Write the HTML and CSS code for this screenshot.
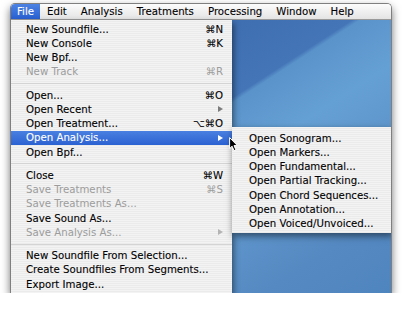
FILE: index.html
```html
<!DOCTYPE html>
<html lang="en">
<head>
    <meta charset="UTF-8">
    <title>File Menu</title>
    <link rel="stylesheet" href="styles.css">
</head>
<body>

    <div class="screen">
        <div class="menubar">
            <span class="title first active">File</span>
            <span class="title">Edit</span>
            <span class="title">Analysis</span>
            <span class="title">Treatments</span>
            <span class="title">Processing</span>
            <span class="title">Window</span>
            <span class="title">Help</span>
        </div>

        <div class="desktop"></div>

        <!-- File menu -->
        <div class="menu file-menu">
            <div class="item"><span>New Soundfile...</span><span class="key">⌘N</span></div>
            <div class="item"><span>New Console</span><span class="key">⌘K</span></div>
            <div class="item"><span>New Bpf...</span></div>
            <div class="item disabled"><span>New Track</span><span class="key">⌘R</span></div>
            <div class="sep"></div>
            <div class="item"><span>Open...</span><span class="key">⌘O</span></div>
            <div class="item"><span>Open Recent</span><span class="arrow gray"></span></div>
            <div class="item"><span>Open Treatment...</span><span class="key">⌥⌘O</span></div>
            <div class="item selected"><span>Open Analysis...</span><span class="arrow"></span></div>
            <div class="item"><span>Open Bpf...</span></div>
            <div class="sep"></div>
            <div class="item"><span>Close</span><span class="key">⌘W</span></div>
            <div class="item disabled"><span>Save Treatments</span><span class="key">⌘S</span></div>
            <div class="item disabled"><span>Save Treatments As...</span></div>
            <div class="item"><span>Save Sound As...</span></div>
            <div class="item disabled"><span>Save Analysis As...</span><span class="arrow gray"></span></div>
            <div class="sep"></div>
            <div class="item"><span>New Soundfile From Selection...</span></div>
            <div class="item"><span>Create Soundfiles From Segments...</span></div>
            <div class="item"><span>Export Image...</span></div>
        </div>

        <!-- Open Analysis submenu -->
        <div class="menu submenu">
            <div class="item"><span>Open Sonogram...</span></div>
            <div class="item"><span>Open Markers...</span></div>
            <div class="item"><span>Open Fundamental...</span></div>
            <div class="item"><span>Open Partial Tracking...</span></div>
            <div class="item"><span>Open Chord Sequences...</span></div>
            <div class="item"><span>Open Annotation...</span></div>
            <div class="item"><span>Open Voiced/Unvoiced...</span></div>
        </div>

        <svg class="cursor" width="9" height="15" viewBox="0 0 9 15">
            <path d="M0.6 0.6 L0.6 11.6 L3.1 9.2 L5 13.6 L6.9 12.8 L5 8.6 L8.4 8.6 Z" fill="#000" stroke="#fff" stroke-width="1"/>
        </svg>
    </div>

</body>
</html>
```

FILE: styles.css
```css
body {
    margin: 0;
    background-color: #fff;
    font-family: "DejaVu Sans", Verdana, sans-serif;
}

.screen {
    position: relative;
    margin: 3px 0 0 10px;
    width: 380px;
    height: 289px;
    border: 1px solid #7f7f7f;
    border-bottom: none;
    border-radius: 5px 5px 0 0;
    overflow: hidden;
    display: flex;
    flex-direction: column;
    box-shadow: 0 4px 8px rgba(0, 0, 0, 0.55);
}

.menubar {
    display: flex;
    height: 15px;
    line-height: 15px;
    font-size: 10.2px;
    color: #000;
    -webkit-text-stroke: 0.1px;
    border-bottom: 1px solid #9a9a9a;
    background: linear-gradient(#fcfcfc, #e4e4e4);
}

.title {
    padding: 0 7px;
}

.title.first {
    padding: 0 6px;
}

.title.active {
    color: #fff;
    background: linear-gradient(#4c82e2, #2860d2);
}

.desktop {
    flex: 1;
    background: linear-gradient(147deg, #3462a4 0%, #4475b7 42.6%, #5a93ca 43.6%, #65a0d4 56%, #5589c1 84%, #4f85bf 100%);
}

.menu {
    position: absolute;
    font-size: 10.2px;
    color: #000;
    -webkit-text-stroke: 0.1px;
    background: repeating-linear-gradient(#f3f3f3 0 1px, #ebebeb 1px 2px);
}

.file-menu {
    left: 0;
    top: 16px;
    width: 221px;
    padding: 2px 0;
    box-shadow: 2px 3px 6px rgba(0, 0, 0, 0.45);
}

.submenu {
    left: 221px;
    top: 123px;
    width: 160px;
    padding: 4px 0 2.5px;
    box-shadow: 1px 3px 7px rgba(0, 0, 0, 0.5);
}

.item {
    display: flex;
    justify-content: space-between;
    align-items: center;
    height: 14.25px;
    padding: 0 9px 0 15px;
    white-space: nowrap;
}

.submenu .item {
    padding-left: 17px;
}

.item.disabled {
    color: #9c9c9c;
    -webkit-text-stroke: 0;
}

.item.selected {
    color: #fff;
    background: linear-gradient(#4a80e0, #2b62d2);
}

.arrow {
    width: 0;
    height: 0;
    border-top: 3.5px solid transparent;
    border-bottom: 3.5px solid transparent;
    border-left: 5.5px solid #fff;
}

.arrow.gray {
    border-left-color: #7c7c7c;
}

.item.disabled .arrow.gray {
    border-left-color: #b4b4b4;
}

.sep {
    height: 1px;
    margin: 4px 0;
    background-color: #d4d4d4;
}

.cursor {
    position: absolute;
    left: 218px;
    top: 133px;
}
```
